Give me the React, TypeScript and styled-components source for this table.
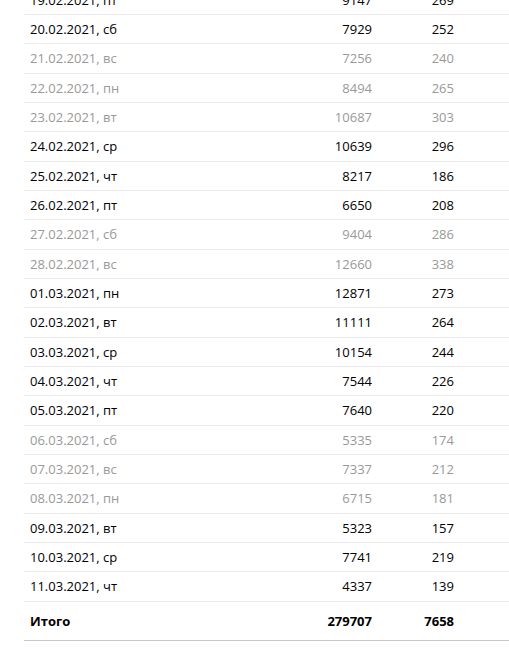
import React from "react";
import styled, { createGlobalStyle } from "styled-components";

const GlobalStyle = createGlobalStyle`
  body {
    margin: 0;
    background: #fff;
    font-family: "Open Sans", "Noto Sans", sans-serif;
    overflow: hidden;
  }
`;

const Table = styled.div`
  margin-top: -14.33px;
  margin-left: 24px;
  font-size: 13px;
`;

const Row = styled.div<{ $muted?: boolean }>`
  display: grid;
  grid-template-columns: 1fr 90px 82px 55px;
  align-items: center;
  height: 29.33px;
  padding-left: 6px;
  border-bottom: 1px solid #ebebeb;
  box-sizing: border-box;
  color: ${({ $muted }) => ($muted ? "#999" : "#000")};
`;

const TotalRow = styled(Row)`
  height: 39.33px;
  font-weight: 700;
  border-bottom: 1px solid #c8c8c8;
`;

const Num = styled.span`
  text-align: right;
`;

type Day = { date: string; wd: string; visits: number; users: number };

const days: Day[] = [
  { date: "19.02.2021", wd: "пт", visits: 9147, users: 269 },
  { date: "20.02.2021", wd: "сб", visits: 7929, users: 252 },
  { date: "21.02.2021", wd: "вс", visits: 7256, users: 240 },
  { date: "22.02.2021", wd: "пн", visits: 8494, users: 265 },
  { date: "23.02.2021", wd: "вт", visits: 10687, users: 303 },
  { date: "24.02.2021", wd: "ср", visits: 10639, users: 296 },
  { date: "25.02.2021", wd: "чт", visits: 8217, users: 186 },
  { date: "26.02.2021", wd: "пт", visits: 6650, users: 208 },
  { date: "27.02.2021", wd: "сб", visits: 9404, users: 286 },
  { date: "28.02.2021", wd: "вс", visits: 12660, users: 338 },
  { date: "01.03.2021", wd: "пн", visits: 12871, users: 273 },
  { date: "02.03.2021", wd: "вт", visits: 11111, users: 264 },
  { date: "03.03.2021", wd: "ср", visits: 10154, users: 244 },
  { date: "04.03.2021", wd: "чт", visits: 7544, users: 226 },
  { date: "05.03.2021", wd: "пт", visits: 7640, users: 220 },
  { date: "06.03.2021", wd: "сб", visits: 5335, users: 174 },
  { date: "07.03.2021", wd: "вс", visits: 7337, users: 212 },
  { date: "08.03.2021", wd: "пн", visits: 6715, users: 181 },
  { date: "09.03.2021", wd: "вт", visits: 5323, users: 157 },
  { date: "10.03.2021", wd: "ср", visits: 7741, users: 219 },
  { date: "11.03.2021", wd: "чт", visits: 4337, users: 139 },
];

// weekends and holidays are greyed out
const muted = new Set(["21.02.2021", "22.02.2021", "23.02.2021", "27.02.2021", "28.02.2021", "06.03.2021", "07.03.2021", "08.03.2021"]);

const App: React.FC = () => (
  <>
    <GlobalStyle />
    <Table>
      {days.map((d) => (
        <Row key={d.date} $muted={muted.has(d.date)}>
          <span>
            {d.date}, {d.wd}
          </span>
          <Num>{d.visits}</Num>
          <Num>{d.users}</Num>
          <span />
        </Row>
      ))}
      <TotalRow>
        <span>Итого</span>
        <Num>279707</Num>
        <Num>7658</Num>
        <span />
      </TotalRow>
    </Table>
  </>
);

export default App;
